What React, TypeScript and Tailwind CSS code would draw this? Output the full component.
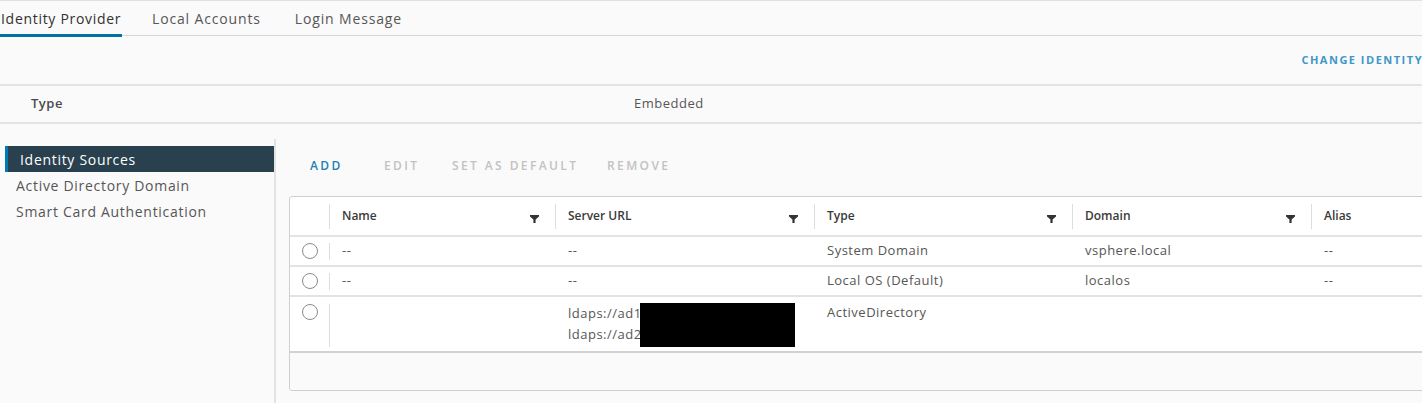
import React from 'react';

type Row = {
  name: string;
  urls: string[];
  type: string;
  domain: string;
  alias: string;
  redacted?: boolean;
};

const ROWS: Row[] = [
  { name: '--', urls: ['--'], type: 'System Domain', domain: 'vsphere.local', alias: '--' },
  { name: '--', urls: ['--'], type: 'Local OS (Default)', domain: 'localos', alias: '--' },
  { name: '', urls: ['ldaps://ad1.', 'ldaps://ad2.'], type: 'ActiveDirectory', domain: '', alias: '', redacted: true },
];

const COLUMNS = [
  { label: 'Name', width: 'w-[226px]', filter: true },
  { label: 'Server URL', width: 'w-[259px]', filter: true },
  { label: 'Type', width: 'w-[258px]', filter: true },
  { label: 'Domain', width: 'w-[239px]', filter: true },
  { label: 'Alias', width: 'flex-1', filter: false },
];

const FilterIcon = () => (
  <svg width="9" height="8" viewBox="0 0 9 8" className="shrink-0">
    <path d="M0 0h9v1.6L5.6 4.4V8H3.4V4.4L0 1.6z" fill="#333" />
  </svg>
);

const Radio = () => (
  <div className="w-[16px] h-[16px] rounded-full border-[1.5px] border-[#8a8a8a] bg-white" />
);

const Sep = ({ h = 'h-[25px]' }: { h?: string }) => <div className={`w-px ${h} bg-[#ddd] shrink-0`} />;

export default function App() {
  return (
    <div className="w-[1422px] h-[403px] overflow-hidden bg-[#fafafa] border-t border-[#e0e0e0] text-[#565656]" style={{ fontFamily: '"Open Sans", "Liberation Sans", sans-serif' }}>
      {/* tabs */}
      <div className="flex h-[35px] border-b border-[#d7d7d7] text-[14px] tracking-[0.7px]">
        <div className="relative w-[122px] flex items-center pl-[1px] text-[#313131]">
          Identity Provider
          <div className="absolute left-0 right-0 bottom-[-2px] h-[3px] bg-[#0072a3]" />
        </div>
        <div className="ml-[30px] flex items-center tracking-[0.85px]">Local Accounts</div>
        <div className="ml-[34px] flex items-center tracking-[0.85px]">Login Message</div>
      </div>

      {/* header actions */}
      <div className="h-[50px] flex items-center justify-end border-b-2 border-[#e3e3e3]">
        <span className="text-[11px] font-bold tracking-[1.5px] text-[#3f97c8] -mr-[1px]">CHANGE IDENTITY</span>
      </div>

      {/* type row */}
      <div className="h-[38px] flex items-center border-b-2 border-[#e3e3e3] text-[13px] tracking-[0.5px]">
        <div className="w-[634px] pl-[31px] font-semibold text-[#4a4a4a]">Type</div>
        <div>Embedded</div>
      </div>

      <div className="flex mt-[15px]">
        {/* side nav */}
        <div className="w-[276px] h-[300px] border-r-2 border-[#e3e3e3] pl-[5px] pt-[7px] text-[14px] tracking-[0.7px] shrink-0">
          <div className="h-[26px] flex items-center bg-[#29414e] border-l-[3px] border-[#0079b8] pl-[12px] text-white">
            Identity Sources
          </div>
          <div className="h-[26px] flex items-center pl-[11px]">Active Directory Domain</div>
          <div className="h-[26px] flex items-center pl-[11px]">Smart Card Authentication</div>
        </div>

        {/* main panel */}
        <div className="flex-1 pl-[13px] min-w-0">
          <div className="h-[54px] flex items-center text-[12px] font-semibold tracking-[2.4px]">
            <span className="ml-[21px] w-[74px] text-[#1f7fb5]">ADD</span>
            <span className="w-[68px] text-[#c2c2c2]">EDIT</span>
            <span className="w-[155px] text-[#c2c2c2]">SET AS DEFAULT</span>
            <span className="text-[#c2c2c2]">REMOVE</span>
          </div>

          <div className="w-[1200px] mt-[3px] border border-[#cfcfcf] rounded-[3px] bg-white">
            {/* column headers */}
            <div className="h-[40px] flex items-center border-b-2 border-[#e3e3e3] text-[12px] font-semibold text-[#3a3a3a]">
              <div className="w-[39px]" />
              {COLUMNS.map(col => (
                <div key={col.label} className={`${col.width} flex items-center h-full shrink-0`}>
                  <Sep />
                  <div className="flex-1 flex items-center justify-between pl-[12px] pr-[16px]">
                    <span>{col.label}</span>
                    {col.filter && <span className="mt-[6px]"><FilterIcon /></span>}
                  </div>
                </div>
              ))}
            </div>

            {/* rows */}
            {ROWS.map((row, i) => (
              <div
                key={i}
                className={`flex text-[13px] tracking-[0.5px] ${i === ROWS.length - 1 ? 'h-[56px] border-b-2 border-[#d2d2d2]' : 'h-[30px] border-b-2 border-[#e3e3e3]'} ${row.redacted ? 'items-start pt-[7px]' : 'items-center'}`}
              >
                <div className="w-[39px] flex justify-center pl-[1px]">
                  <Radio />
                </div>
                <Sep h={row.redacted ? 'h-[43px]' : 'h-[17px]'} />
                <div className="w-[225px] pl-[12px] shrink-0">{row.name}</div>
                <div className="relative w-[259px] pl-[13px] shrink-0 leading-[21px] -mt-[1px]">
                  {row.urls.map(u => (
                    <div key={u} className={row.redacted ? '' : 'leading-[17px]'}>{u}</div>
                  ))}
                  {row.redacted && <div className="absolute left-[85px] top-0 w-[155px] h-[44px] bg-black" />}
                </div>
                <div className="w-[258px] pl-[13px] shrink-0 -mt-[1px]">{row.type}</div>
                <div className="w-[239px] pl-[13px] shrink-0 -mt-[1px]">{row.domain}</div>
                <div className="flex-1 pl-[13px] -mt-[1px]">{row.alias}</div>
              </div>
            ))}

            {/* footer */}
            <div className="h-[37px] bg-[#fafafa] rounded-b-[3px]" />
          </div>
        </div>
      </div>
    </div>
  );
}
